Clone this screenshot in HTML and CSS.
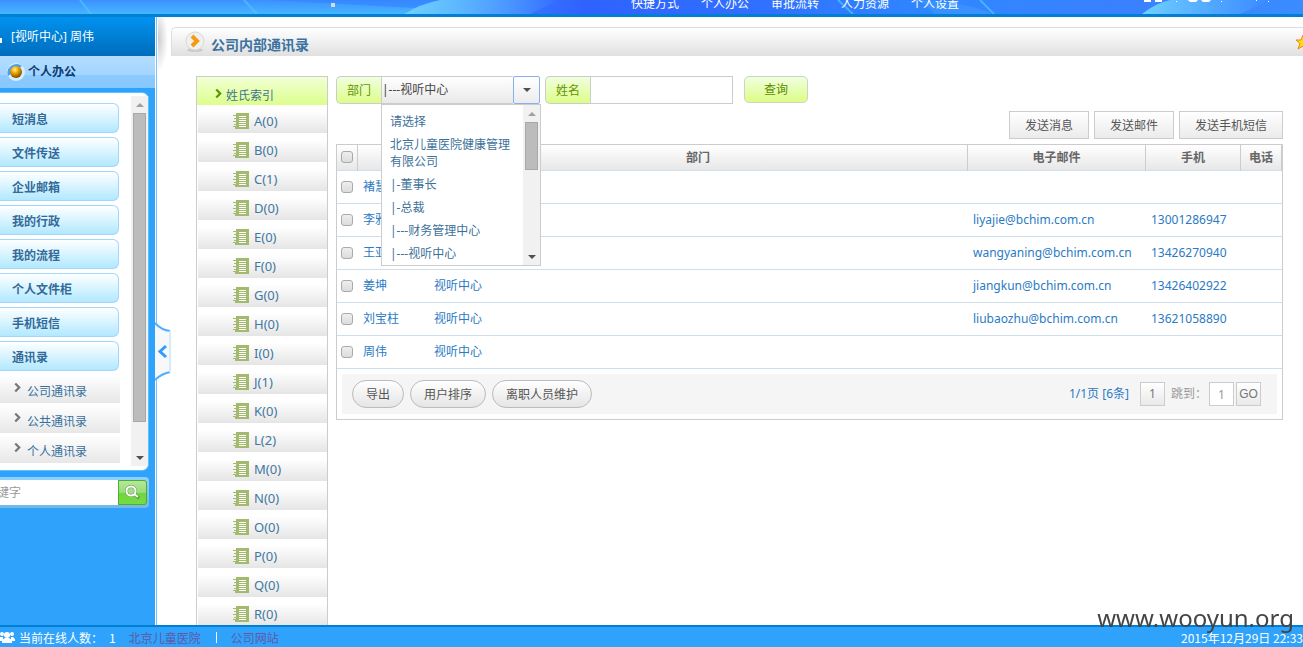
FILE: index.html
```
<!doctype html>
<html lang="zh-CN">
<head>
    <meta charset="utf-8">
    <title>公司内部通讯录</title>
    <link rel="stylesheet" href="styles.css">
</head>
<body>
    <svg class="defs" width="0" height="0" aria-hidden="true">
        <symbol id="book" viewBox="0 0 16 16">
            <path d="M3 0h13v16H2v-2h1z" fill="#a3b96d"/>
            <path d="M0 2.5h3M1 5.5h3M0 8.5h3M1 11.5h3M0 13.5h3" stroke="#a3b96d"/>
            <path d="M6 3.5h7M6 5.5h7M6 7.5h7M6 9.5h7M6 11.5h7M6 13.5h7" stroke="#fff"/>
        </symbol>
        <symbol id="arrow" viewBox="0 0 6 8">
            <path d="M1 0.5L4.5 4L1 7.5" fill="none" stroke="currentColor" stroke-width="2"/>
        </symbol>
    </svg>

    <header class="top">
        <svg class="swoosh" viewBox="0 0 1303 14" preserveAspectRatio="none" aria-hidden="true">
            <defs>
                <linearGradient id="left" x2="0" y2="1"><stop offset="0" stop-color="#3d90ff"/><stop offset="1" stop-color="#45b6ff"/></linearGradient>
                <linearGradient id="beam"><stop offset="0" stop-color="#6ed0ff"/><stop offset="1" stop-color="#6ed0ff" stop-opacity="0"/></linearGradient>
            </defs>
            <path d="M0 0H440Q420 4 404 14H0Z" fill="url(#left)"/>
            <path d="M270 0H440Q425 4 415 8Z" fill="#2f7dff" opacity=".5"/>
            <path d="M404 14Q420 4 440 0H560L530 14Z" fill="url(#beam)"/>
            <path d="M80 0L91 14M244 0L257 14M838 0L853 14M980 0L994 14" stroke="#52c4ff" stroke-width="2" opacity=".7"/>
            <path d="M920 0Q975 4 992 14H935Z" fill="#49a0ff" opacity=".4"/>
            <path d="M1142 14Q1156 3 1170 0H1270L1240 14Z" fill="url(#beam)"/>
            <path d="M331 3h4v4h-4z" fill="#d5dde5"/>
        </svg>
        <nav class="topnav">
            <a href="#">快捷方式</a>
            <a href="#">个人办公</a>
            <a href="#">审批流转</a>
            <a href="#">人力资源</a>
            <a href="#">个人设置</a>
        </nav>
        <svg class="tools" width="130" height="14" viewBox="0 0 130 14" aria-hidden="true">
            <path d="M0 0h7v2H0zM11 0h7v2h-7zM44 0h10l-2 2h-6zM57 0h10l-2 2h-6zM32 1h1v1h-1zM77 1h1v1h-1zM112 0h1v1h-1zM124 1h1v1h-1z" fill="#fff"/>
        </svg>
    </header>

    <div class="main">
        <aside class="side">
            <div class="user"><i class="usericon"></i>[视听中心] 周伟</div>
            <div class="sidetitle">
                <svg width="18" height="18" viewBox="0 0 18 18" aria-hidden="true">
                    <defs><radialGradient id="gold" cx=".4" cy=".3" r=".7"><stop offset="0" stop-color="#fff3a0"/><stop offset=".4" stop-color="#f0ae00"/><stop offset="1" stop-color="#7a4a00"/></radialGradient></defs>
                    <circle cx="9" cy="9" r="9" fill="#d8eeff"/>
                    <path d="M1 13A9 9 0 0 1 15 3Z" fill="#4a9fe8"/>
                    <circle cx="9" cy="9" r="6" fill="url(#gold)"/>
                </svg>
                个人办公
            </div>
            <div class="panel">
                <div class="menu">
                    <button>短消息</button>
                    <button>文件传送</button>
                    <button>企业邮箱</button>
                    <button>我的行政</button>
                    <button>我的流程</button>
                    <button>个人文件柜</button>
                    <button>手机短信</button>
                    <button>通讯录</button>
                    <ul class="submenu">
                        <li><svg width="7" height="9"><use href="#arrow"/></svg><a href="#">公司通讯录</a></li>
                        <li><svg width="7" height="9"><use href="#arrow"/></svg><a href="#">公共通讯录</a></li>
                        <li><svg width="7" height="9"><use href="#arrow"/></svg><a href="#">个人通讯录</a></li>
                    </ul>
                </div>
                <div class="scroll sidescroll"><i class="up"></i><i class="thumb sidethumb"></i><i class="down"></i></div>
            </div>
            <form class="search">
                <input type="text" placeholder="键字" aria-label="关键字">
                <button type="button" aria-label="搜索">
                    <svg width="16" height="16" viewBox="0 0 16 16"><circle cx="6" cy="6" r="4.500" fill="#a4dc88" stroke="#5a9a48" stroke-width="3"/><path d="M9 9L14 13" stroke="#5a8a4c" stroke-width="3"/><circle cx="6" cy="6" r="4.500" fill="none" stroke="#fff" stroke-width="2"/><path d="M9 9L13 12" stroke="#fff" stroke-width="2"/></svg>
                </button>
            </form>
            <button class="fold" aria-label="收起">
                <svg width="16" height="62" viewBox="0 0 16 62">
                    <path d="M0 1Q6 9 15 10V51Q6 53 0 60Z" fill="#f7f8fa"/>
                    <path d="M0 2Q6 9 15 10M15 51Q6 53 0 59" fill="none" stroke="#55adff" stroke-width="2"/>
                    <path d="M15 10V51" stroke="#d5e9ff" stroke-width="2"/>
                    <path d="M11 25L5 30.500L11 36" fill="none" stroke="#2f9cff" stroke-width="3"/>
                </svg>
            </button>
        </aside>

        <div class="content">
            <div class="titlebar">
                <svg width="22" height="22" viewBox="0 0 22 22" aria-hidden="true">
                    <ellipse cx="11" cy="19" rx="8" ry="2" fill="#ccc"/>
                    <circle cx="11" cy="10" r="9" fill="#f0f0f0" stroke="#d8d8d8"/>
                    <path d="M8 5L13 10L8 15" fill="none" stroke="#f59a14" stroke-width="4"/>
                </svg>
                <h1>公司内部通讯录</h1>
                <svg class="star" width="16" height="16" viewBox="0 0 16 16" aria-hidden="true">
                    <path d="M8 1L10 6L15 6L11 9.500L13 15L8 12L3 15L5 9.500L1 6L6 6Z" fill="#ffe000" stroke="#ee8516"/>
                </svg>
            </div>
            <div class="work">
                <div class="letters">
                    <div class="lettershead"><svg width="7" height="9"><use href="#arrow"/></svg>姓氏索引</div>
                    <ul>
                        <li><a href="#"><svg width="16" height="16"><use href="#book"/></svg>A(0)</a></li>
                        <li><a href="#"><svg width="16" height="16"><use href="#book"/></svg>B(0)</a></li>
                        <li><a href="#"><svg width="16" height="16"><use href="#book"/></svg>C(1)</a></li>
                        <li><a href="#"><svg width="16" height="16"><use href="#book"/></svg>D(0)</a></li>
                        <li><a href="#"><svg width="16" height="16"><use href="#book"/></svg>E(0)</a></li>
                        <li><a href="#"><svg width="16" height="16"><use href="#book"/></svg>F(0)</a></li>
                        <li><a href="#"><svg width="16" height="16"><use href="#book"/></svg>G(0)</a></li>
                        <li><a href="#"><svg width="16" height="16"><use href="#book"/></svg>H(0)</a></li>
                        <li><a href="#"><svg width="16" height="16"><use href="#book"/></svg>I(0)</a></li>
                        <li><a href="#"><svg width="16" height="16"><use href="#book"/></svg>J(1)</a></li>
                        <li><a href="#"><svg width="16" height="16"><use href="#book"/></svg>K(0)</a></li>
                        <li><a href="#"><svg width="16" height="16"><use href="#book"/></svg>L(2)</a></li>
                        <li><a href="#"><svg width="16" height="16"><use href="#book"/></svg>M(0)</a></li>
                        <li><a href="#"><svg width="16" height="16"><use href="#book"/></svg>N(0)</a></li>
                        <li><a href="#"><svg width="16" height="16"><use href="#book"/></svg>O(0)</a></li>
                        <li><a href="#"><svg width="16" height="16"><use href="#book"/></svg>P(0)</a></li>
                        <li><a href="#"><svg width="16" height="16"><use href="#book"/></svg>Q(0)</a></li>
                        <li><a href="#"><svg width="16" height="16"><use href="#book"/></svg>R(0)</a></li>
                    </ul>
                </div>

                <div class="list">
                    <form class="filter">
                        <label for="dept" class="tag">部门</label>
                        <div class="combo">
                            <select id="dept"><option>|---视听中心</option></select>
                            <button type="button" class="combobtn" aria-label="展开"><i class="down"></i></button>
                            <div class="drop">
                                <ul>
                                    <li>请选择</li>
                                    <li>北京儿童医院健康管理有限公司</li>
                                    <li>|-董事长</li>
                                    <li>|-总裁</li>
                                    <li>|---财务管理中心</li>
                                    <li>|---视听中心</li>
                                </ul>
                                <div class="scroll"><i class="up"></i><i class="thumb dropthumb"></i><i class="down"></i></div>
                            </div>
                        </div>
                        <label for="name" class="tag nametag">姓名</label>
                        <input type="text" id="name" class="nameinput">
                        <button type="button" class="query">查询</button>
                    </form>
                    <div class="actions">
                        <button>发送消息</button>
                        <button>发送邮件</button>
                        <button>发送手机短信</button>
                    </div>
                    <div class="tablebox">
                        <table>
                            <thead>
                                <tr>
                                    <th class="c-check"><input type="checkbox" aria-label="全选"></th>
                                    <th class="c-name"></th>
                                    <th>部门</th>
                                    <th class="c-mail">电子邮件</th>
                                    <th class="c-mobile">手机</th>
                                    <th class="c-tel">电话</th>
                                </tr>
                            </thead>
                            <tbody>
                                <tr><td><input type="checkbox" aria-label="褚慧"></td><td>褚慧</td><td></td><td></td><td></td><td></td></tr>
                                <tr><td><input type="checkbox" aria-label="李雅"></td><td>李雅</td><td></td><td>liyajie@bchim.com.cn</td><td>13001286947</td><td></td></tr>
                                <tr><td><input type="checkbox" aria-label="王亚"></td><td>王亚</td><td></td><td>wangyaning@bchim.com.cn</td><td>13426270940</td><td></td></tr>
                                <tr><td><input type="checkbox" aria-label="姜坤"></td><td>姜坤</td><td>视听中心</td><td>jiangkun@bchim.com.cn</td><td>13426402922</td><td></td></tr>
                                <tr><td><input type="checkbox" aria-label="刘宝柱"></td><td>刘宝柱</td><td>视听中心</td><td>liubaozhu@bchim.com.cn</td><td>13621058890</td><td></td></tr>
                                <tr><td><input type="checkbox" aria-label="周伟"></td><td>周伟</td><td>视听中心</td><td></td><td></td><td></td></tr>
                            </tbody>
                        </table>
                        <div class="tfoot">
                            <button class="round">导出</button>
                            <button class="round">用户排序</button>
                            <button class="round">离职人员维护</button>
                            <span class="pages">1/1页 [6条]</span>
                            <button class="pg">1</button>
                            <label for="goto">跳到：</label>
                            <input type="text" id="goto" class="pg pginput" value="1">
                            <button class="pg go">GO</button>
                        </div>
                    </div>
                </div>
            </div>
        </div>
    </div>

    <footer class="bottom">
        <svg width="15" height="13" viewBox="0 0 15 13" aria-hidden="true">
            <circle cx="2" cy="3" r="2" fill="#fff"/>
            <circle cx="12" cy="3" r="2" fill="#fff"/>
            <path d="M0 6h3v4H0zM11 6h2l2 2v2h-4z" fill="#fff"/>
            <circle cx="7" cy="4" r="3" fill="#fff"/>
            <path d="M2 12V9l3-2h4l3 2v3z" fill="#fff"/>
        </svg>
        <span class="online">当前在线人数：</span>
        <span class="count">1</span>
        <a href="#">北京儿童医院</a>
        <i class="sep"></i>
        <a href="#">公司网站</a>
        <span class="clock">2015年12月29日 22:33</span>
    </footer>
    <div class="mark">www.wooyun.org</div>
</body>
</html>
```
FILE: styles.css
```
* {
    box-sizing: border-box;
}
body {
    margin: 0;
    height: 100vh;
    overflow: hidden;
    display: flex;
    flex-direction: column;
    background: #fff;
    font-family: "Noto Sans", "Noto Sans CJK SC", sans-serif;
    font-size: 12px;
    line-height: 18px;
    color: #2a7ac4;
}
button, input, select {
    font: inherit;
    margin: 0;
    padding: 0;
}
button {
    cursor: pointer;
}
a {
    text-decoration: none;
    color: inherit;
}
ul {
    list-style: none;
    margin: 0;
    padding: 0;
}
svg {
    display: block;
    flex: none;
}
.defs {
    position: absolute;
}

/* top bar */
.top {
    position: relative;
    flex: none;
    height: 17px;
    overflow: hidden;
    display: flex;
    justify-content: flex-end;
    align-items: flex-end;
    border-bottom: 3px solid #007fd5;
    background: linear-gradient(to right, #3388ff 0%, #3f8cff 34%, #2f62ff 45%, #3070ff 58%, #2f88ff 72%, #3a80ff 86%, #3a8cff 100%);
}
.swoosh {
    position: absolute;
    left: 0;
    top: 0;
    width: 100%;
    height: 14px;
}
.topnav {
    position: relative;
    display: flex;
    gap: 22px;
    padding-bottom: 1px;
    color: #fff;
    white-space: nowrap;
}
.tools {
    position: relative;
    margin: 0 29px 0 185px;
}

.main {
    flex: 1;
    min-height: 0;
    display: flex;
}

/* left side */
.side {
    position: relative;
    flex: none;
    width: 157px;
    border-right: 1px solid #7cc4ff;
    box-shadow: inset -1px 0 #fff;
    background: #2fa3fb;
}
.user {
    display: flex;
    align-items: center;
    height: 39px;
    margin-right: 1px;
    gap: 9px;
    color: #fff;
    background: linear-gradient(#0092f0, #006dbb);
}
.usericon {
    width: 2px;
    height: 5px;
    margin-top: 8px;
    background: #fff;
}
.sidetitle {
    display: flex;
    align-items: center;
    height: 32px;
    margin-right: 1px;
    padding-left: 7px;
    gap: 3px;
    font-weight: bold;
    color: #0c3d73;
    background: linear-gradient(#b4ddff, #a3d5ff 58%, #8dcaff 60%, #85c8ff);
}
.panel {
    display: flex;
    justify-content: space-between;
    height: 379px;
    margin: 4px 7px 0 0;
    padding: 3px 0;
    border: 1px solid #5cc0ff;
    border-width: 1px 1px 1px 0;
    border-radius: 0 7px 7px 0;
    background: #fff;
}
.menu {
    display: flex;
    flex-direction: column;
    gap: 4px;
    width: 120px;
    padding-top: 7px;
}
.menu button {
    height: 30px;
    margin-right: 1px;
    padding-left: 12px;
    padding-top: 4px;
    text-align: left;
    font-weight: bold;
    color: #336a99;
    border: 1px solid #a2d6fb;
    border-left: 0;
    border-radius: 0 6px 6px 0;
    background: linear-gradient(#fff, #d8f4ff 50%, #b2e8ff);
}
.submenu li {
    display: flex;
    gap: 6px;
    height: 28px;
    margin-bottom: 2px;
    padding: 8px 0 0 14px;
    color: #36709f;
    background: linear-gradient(#fff, #e7e7e7);
}
.submenu svg {
    color: #777;
}
.scroll {
    display: flex;
    flex-direction: column;
    align-items: center;
    width: 17px;
    padding: 7px 0 6px;
    background: #f1f1f1;
}
.sidescroll {
    margin-bottom: 1px;
}
.up, .down {
    width: 0;
    height: 0;
    border: 4px solid transparent;
}
.up {
    border-top: 0;
    border-bottom-color: #a0a0a0;
}
.down {
    border-bottom: 0;
    border-top-color: #505050;
}
.scroll .down {
    margin-top: auto;
}
.thumb {
    width: 13px;
    border: 1px solid #a8a8a8;
    background: #bcbcbc;
}
.sidethumb {
    height: 309px;
    margin-top: 6px;
}
.dropthumb {
    height: 48px;
    margin-top: 6px;
}
.search {
    display: flex;
    height: 31px;
    margin: 6px 7px 0 0;
    padding: 3px 2px 3px 0;
    border-radius: 0 4px 4px 0;
    background: linear-gradient(#8fd0ff, #72b7ea);
}
.search input {
    flex: 1;
    min-width: 0;
    border: 0;
    text-indent: -3px;
    background: #fff;
}
.search input::placeholder {
    color: #999;
    opacity: 1;
}
.search button {
    display: flex;
    align-items: center;
    justify-content: center;
    width: 29px;
    border: 1px solid #4cae2a;
    border-radius: 0 3px 3px 0;
    background: linear-gradient(#b5e79b, #97dd75 50%, #6fd53f 52%, #75dc42);
}
.fold {
    position: absolute;
    left: 155px;
    top: 304px;
    border: 0;
    background: none;
}

/* content */
.content {
    flex: 1;
    min-width: 0;
    overflow: hidden;
    padding: 10px 0 0 14px;
    background: radial-gradient(ellipse at 0 40%, #ccc, #fff 70%) 1px 0 / 10px 55px no-repeat;
}
.titlebar {
    display: flex;
    align-items: center;
    height: 29px;
    padding-left: 12px;
    gap: 5px;
    border: 1px solid #ddd;
    border-width: 1px 0 0 1px;
    border-radius: 5px 0 0 0;
    background: linear-gradient(#fff, #e0e0e0);
}
h1 {
    margin: 0;
    padding-top: 6px;
    font-size: 14px;
    line-height: 20px;
    color: #3a739f;
}
.star {
    margin: 0 -8px 0 auto;
}
.work {
    display: flex;
    align-items: flex-start;
    gap: 8px;
    padding: 20px 20px 0 25px;
}
.letters {
    flex: none;
    width: 132px;
    border: 1px solid #ccc;
}
.lettershead {
    display: flex;
    align-items: center;
    gap: 4px;
    height: 28px;
    padding: 10px 0 0 18px;
    color: #3f7492;
    background: linear-gradient(#f2ffd6, #dcff8c);
}
.lettershead svg {
    margin-bottom: 5px;
    color: #5a9400;
}
.letters li {
    height: 28px;
    margin: 0 0 1px 1px;
    background: linear-gradient(#fff 20%, #e5e5e5);
}
.letters li a {
    display: flex;
    align-items: center;
    gap: 5px;
    padding: 7px 0 0 35px;
    font-size: 13px;
    color: #42789f;
}
.list {
    flex: 1;
    min-width: 0;
}
.filter {
    display: flex;
    height: 28px;
}
.tag {
    width: 45px;
    line-height: 28px;
    text-align: center;
    color: #659300;
    border: 1px solid #ccc;
    border-right: 0;
    border-radius: 5px 0 0 5px;
    background: linear-gradient(#f0ffe0, #ddfd88);
}
.nametag {
    margin-left: 5px;
}
.combo {
    position: relative;
    display: flex;
    width: 159px;
}
.combo select {
    flex: 1;
    min-width: 0;
    appearance: none;
    color: #444;
    border: 1px solid #ccc;
    border-right: 0;
    border-radius: 0;
    background: linear-gradient(#fff, #e9e9e9);
}
.combobtn {
    display: flex;
    align-items: center;
    justify-content: center;
    width: 27px;
    border: 1px solid #86b0ef;
    border-radius: 2px;
    background: linear-gradient(#fff, #ececec);
}
.drop {
    position: absolute;
    left: 0;
    top: 28px;
    z-index: 5;
    display: flex;
    width: 160px;
    height: 162px;
    border: 1px solid #ccc;
    background: #fff;
}
.drop ul {
    flex: 1;
    padding: 5px 0 0 8px;
    color: #3d7199;
}
.drop li {
    width: 121px;
    padding: 3px 0;
    line-height: 17px;
}
.nameinput {
    width: 143px;
    padding: 0 5px;
    border: 1px solid #ccc;
    background: #fff;
}
.query {
    width: 64px;
    height: 27px;
    margin-left: 11px;
    color: #5b8a00;
    border: 1px solid #ccd4c4;
    border-radius: 5px;
    background: linear-gradient(#f0ffe0, #dcfd85);
}
.actions {
    display: flex;
    justify-content: flex-end;
    gap: 5px;
    margin: 7px 0 5px;
}
.actions button {
    height: 28px;
    padding: 2px 15px 0;
    color: #555;
    border: 1px solid #ccc;
    background: linear-gradient(#fff, #ebebeb);
}
.tablebox {
    border: 1px solid #ccc;
}
table {
    width: 100%;
    table-layout: fixed;
    border-collapse: separate;
    border-spacing: 0;
}
th {
    height: 26px;
    padding: 0;
    color: #666;
    border-right: 1px solid #ccc;
    border-bottom: 1px solid #cfdeed;
    background: linear-gradient(#fff, #e7e7e7);
}
th.c-name {
    border-right-color: transparent;
}
td {
    height: 33px;
    padding: 0 0 0 5px;
    border-bottom: 1px solid #cfdeed;
}
.c-check {
    width: 21px;
}
td:first-child {
    padding-left: 4px;
}
.c-name {
    width: 71px;
}
.c-mail {
    width: 178px;
}
.c-mobile {
    width: 95px;
}
.c-tel {
    width: 41px;
}
input[type=checkbox] {
    display: block;
    appearance: none;
    width: 12px;
    height: 12px;
    margin-bottom: 1px;
    border: 1px solid #aaa;
    border-radius: 3px;
    background: linear-gradient(#eee, #dcdcdc);
}
th input[type=checkbox] {
    margin-left: 4px;
}
.tfoot {
    display: flex;
    align-items: center;
    height: 40px;
    margin: 5px;
    padding: 0 16px 0 10px;
    background: #f5f5f5;
}
.round {
    height: 28px;
    margin-right: 6px;
    padding: 1px 13px 0;
    color: #555;
    border: 1px solid #bbb;
    border-radius: 14px;
    background: linear-gradient(#fff, #e5e5e5);
}
.pages {
    margin: 0 11px 0 auto;
}
.tfoot label {
    margin-left: 6px;
    color: #999;
}
.pg {
    width: 25px;
    height: 24px;
    text-align: center;
    color: #777;
    border: 1px solid #ccc;
    background: linear-gradient(#fff, #e9e9e9);
}
.pginput {
    margin-left: 2px;
    color: #999;
    background: #fff;
}
.go {
    margin-left: 2px;
    font-family: "Liberation Sans", sans-serif;
}

/* status bar */
.bottom {
    flex: none;
    display: flex;
    align-items: center;
    height: 22px;
    overflow: hidden;
    padding-top: 1px;
    border-top: 2px solid #007fd5;
    color: #fff;
    white-space: nowrap;
    font-family: "Noto Sans CJK SC", sans-serif;
    background: #2fa3fb;
}
.online {
    margin-left: 4px;
}
.count {
    margin: 0 13px 0 6px;
}
.bottom a {
    color: #6258a8;
}
.sep {
    width: 1px;
    height: 11px;
    margin: 0 14px 0 15px;
    background: #fff;
}
.clock {
    flex: 0 0 119px;
    margin-left: auto;
}
.mark {
    position: fixed;
    right: 9px;
    bottom: 14px;
    font-size: 24px;
    line-height: 30px;
    color: #444;
}
```
